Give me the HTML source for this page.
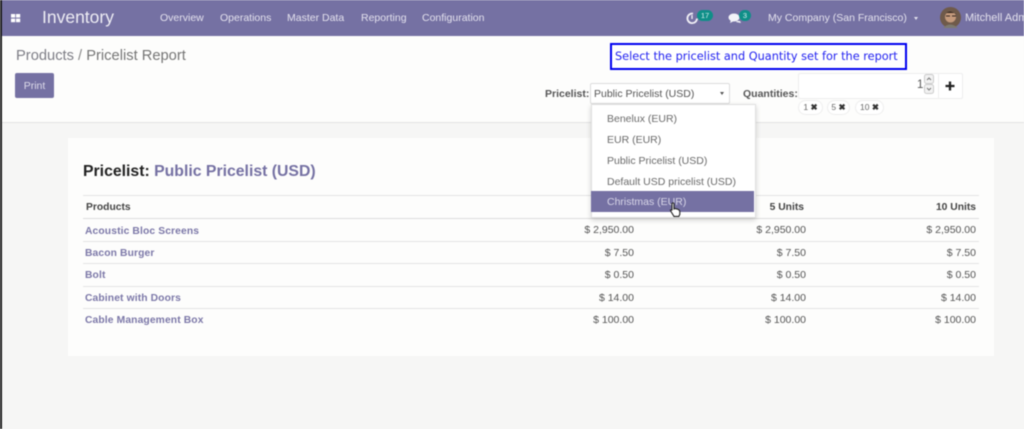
<!DOCTYPE html>
<html><head><meta charset="utf-8"><style>
html,body{margin:0;padding:0;width:1024px;height:429px;overflow:hidden;background:#f6f6f5;font-family:"Liberation Sans",sans-serif;}
.a{position:absolute;white-space:nowrap;}
#blur{position:absolute;left:0;top:0;width:1024px;height:429px;filter:blur(.4px);overflow:hidden;}
.nav{font-size:10.5px;color:#e4e2ee;top:12px;}
.th{font-size:10.3px;font-weight:bold;color:#444;}
.l{font-size:10.3px;font-weight:bold;color:#7c78a8;left:85px;letter-spacing:.12px;}
.r{font-size:10.5px;color:#555;text-align:right;width:90px;}
.hr{position:absolute;left:83px;width:896px;height:1px;background:#e4e4e4;}
.dd{font-size:10.5px;color:#6a6a6a;left:607px;}
.tag{position:absolute;top:100px;height:13px;border:1px solid #eee;border-radius:8px;background:#fff;font-size:8.5px;color:#666;line-height:13px;text-align:center;}
.tag b{color:#333;}
</style></head><body><div id="blur">
<div class="a" style="left:0;top:0;width:2px;height:429px;background:#1b1b1b;z-index:9"></div>
<div class="a" style="left:0;top:0;width:1024px;height:36px;background:#7571a3"></div>
<div class="a" style="left:0;top:36px;width:1024px;height:86px;background:#fdfdfc;border-bottom:1px solid #e2e2e2"></div>
<svg class="a" style="left:10px;top:14px" width="12" height="9"><rect x="1" y="0" width="4.2" height="3.6" fill="#fff"/><rect x="6" y="0" width="4.2" height="3.6" fill="#fff"/><rect x="1" y="4.6" width="4.2" height="3.6" fill="#fff"/><rect x="6" y="4.6" width="4.2" height="3.6" fill="#fff"/></svg>
<div class="a" style="left:42px;top:7px;font-size:17.5px;color:#eeedf4">Inventory</div>
<div class="a nav" style="left:160px">Overview</div>
<div class="a nav" style="left:220px">Operations</div>
<div class="a nav" style="left:287px">Master Data</div>
<div class="a nav" style="left:361px">Reporting</div>
<div class="a nav" style="left:422px">Configuration</div>
<svg class="a" style="left:685px;top:11px" width="14" height="14"><path d="M8 2.600A4.800 4.800 0 1 0 12 7.500" fill="none" stroke="#f1f0f6" stroke-width="1.800"/><path d="M7 4V8" stroke="#f1f0f6" stroke-width="1.300"/></svg>
<div class="a" style="left:697px;top:10px;width:16px;height:11px;border-radius:6px;background:#0f8f88;color:#d5eeee;font-size:7.5px;line-height:11px;text-align:center">17</div>
<svg class="a" style="left:728px;top:12px" width="14" height="13"><ellipse cx="6" cy="5.500" rx="5.500" ry="4" fill="#f3f3f8"/><path d="M3 8l-1 3 4-2zM9 9h3l1 2-5-1z" fill="#f3f3f8"/></svg>
<div class="a" style="left:739px;top:10px;width:12px;height:11px;border-radius:6px;background:#0f8f88;color:#d5eeee;font-size:7.5px;line-height:11px;text-align:center">3</div>
<div class="a" style="left:768px;top:12px;font-size:10.500px;color:#e4e2ee">My Company (San Francisco)</div>
<div class="a" style="left:914px;top:17px;border:2.500px solid transparent;border-top:3px solid #e4e2ee"></div>
<svg class="a" style="left:940px;top:7px" width="21" height="21"><circle cx="10.500" cy="10.500" r="10.500" fill="#6f5a4a"/><circle cx="10.500" cy="10" r="5.500" fill="#c49a7c"/><path d="M4 8Q10 1 17 8L15 6H6z" fill="#33261f"/><path d="M6 9h4M12 9h4" stroke="#33261f"/><path d="M3 21Q10 14 18 21z" fill="#7d7a6f"/></svg>
<div class="a" style="left:965px;top:12px;font-size:11px;color:#e4e2ee">Mitchell Admin</div>

<div class="a" style="left:16px;top:47px;font-size:14.700px;color:#7d7d85;line-height:18px">Products <span style="color:#888">/</span> <span style="color:#757575">Pricelist Report</span></div>
<div class="a" style="left:15px;top:73px;width:39px;height:25px;background:#7571a3;border-radius:2px;color:#dedcea;font-size:10.500px;line-height:26px;text-align:center">Print</div>

<div class="a" style="left:610px;top:43px;width:290px;height:23px;border:2px solid #0000f0;background:#fff;color:#2020f0;font-family:'DejaVu Sans',sans-serif;font-size:11.300px;line-height:23px;padding-left:3px">Select the pricelist and Quantity set for the report</div>

<div class="a" style="left:545px;top:88px;font-size:10.500px;font-weight:bold;color:#555">Pricelist:</div>
<div class="a" style="left:590px;top:83px;width:135px;height:19px;border:1px solid #ddd;border-radius:2px;background:#fff;font-size:10.500px;color:#555;line-height:20px;padding-left:3px">Public Pricelist (USD)</div>
<div class="a" style="left:720px;top:92px;border:2px solid transparent;border-top:3px solid #555"></div>
<div class="a" style="left:743px;top:88px;font-size:10.500px;font-weight:bold;color:#555">Quantities:</div>
<div class="a" style="left:798px;top:73px;width:163px;height:24px;border:1px solid #eee;border-radius:2px;background:#fff"></div>
<div class="a" style="left:938px;top:74px;width:1px;height:24px;background:#eee"></div>
<div class="a" style="left:917px;top:79px;font-size:11.500px;color:#555">1</div>
<svg class="a" style="left:924px;top:74px" width="11" height="21"><rect x=".5" y=".5" width="9" height="9" rx="2" fill="#f2f2f2" stroke="#ccc"/><rect x=".5" y="10.500" width="9" height="9" rx="2" fill="#f2f2f2" stroke="#ccc"/><path d="M3 6l2-2 2 2M3 14l2 2 2-2" fill="none" stroke="#777"/></svg>
<svg class="a" style="left:944px;top:80px" width="12" height="12"><path d="M6 1.500v9M1.500 6h9" stroke="#222" stroke-width="2.300"/></svg>
<div class="tag" style="left:798px;width:23px">1 <b>✖</b></div>
<div class="tag" style="left:827px;width:21px">5 <b>✖</b></div>
<div class="tag" style="left:855px;width:27px">10 <b>✖</b></div>

<div class="a" style="left:68px;top:138px;width:926px;height:218px;background:#fdfdfc"></div>
<div class="a" style="left:83px;top:163px;font-size:15.800px;font-weight:bold;color:#222">Pricelist: <span style="color:#7571a3">Public Pricelist (USD)</span></div>
<div class="hr" style="top:195px"></div>
<div class="hr" style="top:218px;background:#ddd"></div>
<div class="hr" style="top:241px"></div>
<div class="hr" style="top:263px"></div>
<div class="hr" style="top:286px"></div>
<div class="hr" style="top:308px"></div>
<div class="a th" style="left:86px;top:202px">Products</div>
<div class="a th" style="left:714px;top:202px;width:90px;text-align:right">5 Units</div>
<div class="a th" style="left:886px;top:202px;width:90px;text-align:right">10 Units</div>

<div class="a l" style="top:226px">Acoustic Bloc Screens</div>
<div class="a l" style="top:248px">Bacon Burger</div>
<div class="a l" style="top:270px">Bolt</div>
<div class="a l" style="top:293px">Cabinet with Doors</div>
<div class="a l" style="top:315px">Cable Management Box</div>

<div class="a r" style="left:544px;top:224px">$ 2,950.00</div><div class="a r" style="left:716px;top:224px">$ 2,950.00</div><div class="a r" style="left:886px;top:224px">$ 2,950.00</div>
<div class="a r" style="left:544px;top:247px">$ 7.50</div><div class="a r" style="left:716px;top:247px">$ 7.50</div><div class="a r" style="left:886px;top:247px">$ 7.50</div>
<div class="a r" style="left:544px;top:269px">$ 0.50</div><div class="a r" style="left:716px;top:269px">$ 0.50</div><div class="a r" style="left:886px;top:269px">$ 0.50</div>
<div class="a r" style="left:544px;top:292px">$ 14.00</div><div class="a r" style="left:716px;top:292px">$ 14.00</div><div class="a r" style="left:886px;top:292px">$ 14.00</div>
<div class="a r" style="left:544px;top:314px">$ 100.00</div><div class="a r" style="left:716px;top:314px">$ 100.00</div><div class="a r" style="left:886px;top:314px">$ 100.00</div>

<div class="a" style="left:591px;top:104px;width:163px;height:112px;background:#fff;border:1px solid #e0e0e0;box-shadow:0 2px 5px rgba(0,0,0,.18)"></div>
<div class="a dd" style="top:113px">Benelux (EUR)</div>
<div class="a dd" style="top:134px">EUR (EUR)</div>
<div class="a dd" style="top:155px">Public Pricelist (USD)</div>
<div class="a dd" style="top:176px">Default USD pricelist (USD)</div>
<div class="a" style="left:591px;top:191px;width:163px;height:21px;background:#7571a3"></div>
<div class="a dd" style="top:196px;color:#d8d6e8">Christmas (EUR)</div>
<svg class="a" style="left:669px;top:202px" width="14" height="16"><path d="M3 1.500c1-1 2-.5 2 .5v5l1-.5 1 .3 1 .2 1 .4 1 .5.800 1.500v3l-1 2H5L2 9.500 1.500 8l1.500 0z" fill="#fff" stroke="#222" stroke-width="1.100"/></svg>
</div></body></html>
